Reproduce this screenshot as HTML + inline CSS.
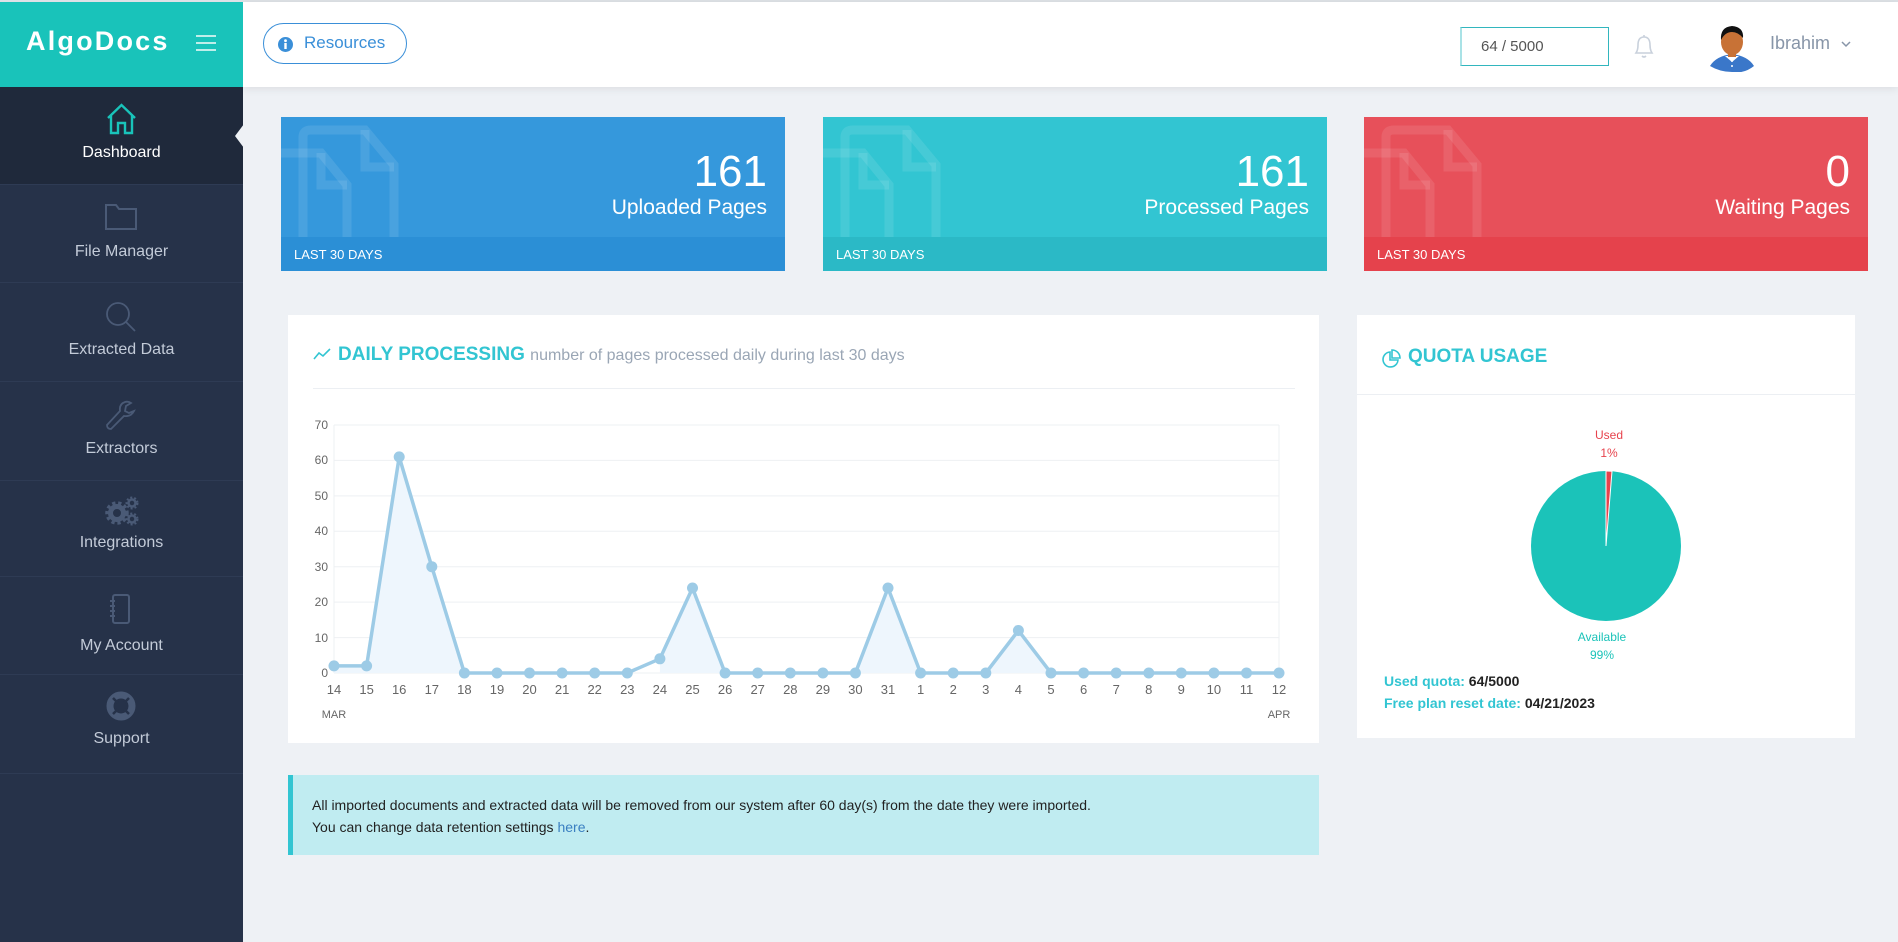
<!DOCTYPE html>
<html><head><meta charset="utf-8"><style>
*{margin:0;padding:0;box-sizing:border-box}
body{width:1898px;height:942px;background:#eef1f5;font-family:"Liberation Sans",sans-serif;position:relative;overflow:hidden}
.a{position:absolute}
.side{left:0;top:87px;width:243px;height:855px;background:#263249}
.item{position:absolute;left:0;width:243px;border-bottom:1px solid #2e3b54;text-align:center;color:#c3cbd8;font-size:16px}
.item svg{position:absolute;left:105px}
.item span{position:absolute;left:0;width:243px}
.card{position:absolute;top:117px;width:504px;height:154px;color:#fff;overflow:hidden}
.card .f{position:absolute;left:0;bottom:0;width:100%;height:34px;font-size:13px;padding:10px 0 0 13px}
.card .n{position:absolute;right:18px;top:30px;font-size:44px;font-weight:300}
.card .l{position:absolute;right:18px;top:79px;font-size:21px}
.panel{position:absolute;background:#fff}
</style></head><body>
<div class="a" style="left:0;top:0;width:1898px;height:2px;background:#dde1e6"></div>
<div class="a" style="left:243px;top:2px;width:1655px;height:85px;background:#fff;box-shadow:0 2px 8px rgba(0,0,0,.08)"></div>
<div class="a" style="left:0;top:2px;width:243px;height:85px;background:#19c3ba"></div>
<div class="a" style="left:26px;top:26px;color:#fff;font-size:27px;font-weight:bold;letter-spacing:2.2px">AlgoDocs</div>
<div class="a" style="left:196px;top:35px;width:20px;height:2px;background:#bfeeea;box-shadow:0 7px 0 #bfeeea,0 14px 0 #bfeeea"></div>
<div class="a" style="left:263px;top:23px;width:144px;height:41px;border:1px solid #3a8fd8;border-radius:21px;color:#3a8fd8;font-size:17px;padding:9px 0 0 40px">Resources</div>
<svg class="a" style="left:278px;top:37px" width="15" height="15"><circle cx="7.5" cy="7.5" r="7.5" fill="#3a8fd8"/><rect x="6.3" y="6" width="2.4" height="6" fill="#fff"/><circle cx="7.5" cy="3.7" r="1.4" fill="#fff"/></svg>
<div class="a" style="left:1460px;top:27px;width:149px;height:39px;border:1px solid #32b6be;border-left:2px solid #a9e2e6;font-size:15px;color:#555;padding:10px 0 0 19px">64 / 5000</div>
<svg class="a" style="left:1633px;top:33px" width="22" height="27" fill="none" stroke="#c9d1dc" stroke-width="1.6"><path d="M3 20 Q5 17 5 12 Q5 4 11 4 Q17 4 17 12 Q17 17 19 20 Z"/><path d="M9 23 Q11 25 13 23"/><path d="M11 2v2"/></svg>
<svg class="a" style="left:1708px;top:22px" width="48" height="50"><path d="M2 44 Q8 34 24 32 Q40 34 46 44 Q36 52 24 50 Q12 50 2 44Z" fill="#3a77c9"/><path d="M17 34 L24 40 L31 34 Z" fill="#fff"/><circle cx="24" cy="39" r="1" fill="#fff"/><circle cx="24" cy="44" r="1" fill="#fff"/><ellipse cx="24" cy="20" rx="11" ry="13" fill="#c87236"/><path d="M13 18 Q12 5 24 4 Q36 5 35 16 Q30 10 24 10 Q17 10 13 18Z" fill="#111"/><rect x="20" y="30" width="8" height="5" fill="#c87236"/></svg>
<div class="a" style="left:1770px;top:33px;font-size:18px;color:#8795a8">Ibrahim</div>
<svg class="a" style="left:1841px;top:41px" width="10" height="7" fill="none" stroke="#8795a8" stroke-width="1.5"><path d="M1 1l4 4 4-4"/></svg>

<div class="a side"></div>
<div class="item" style="top:87px;height:98px;background:#1f293b;color:#fff">
<svg style="top:16px" width="33" height="32" fill="none" stroke="#19c3ba" stroke-width="2.4"><path d="M3 15 L16.5 2 L30 15 M6 12 V30 H13 V20 H20 V30 H27 V12"/></svg><span style="top:57px">Dashboard</span></div>
<div class="a" style="left:235px;top:124px;width:0;height:0;border-top:12px solid transparent;border-bottom:12px solid transparent;border-right:9px solid #eef1f5"></div>
<div class="item" style="top:185px;height:98px"><svg style="top:19px" width="32" height="26" fill="none" stroke="#4a5a76" stroke-width="2"><path d="M1 1 H11 L14 5 H31 V25 H1 Z"/></svg><span style="top:58px">File Manager</span></div>
<div class="item" style="top:283px;height:99px"><svg style="top:18px" width="32" height="32" fill="none" stroke="#4a5a76" stroke-width="1.8"><circle cx="13" cy="13" r="11"/><path d="M21 21 L30 30"/></svg><span style="top:58px">Extracted Data</span></div>
<div class="item" style="top:382px;height:99px"><svg style="top:18px" width="32" height="32" fill="none" stroke="#4a5a76" stroke-width="1.8"><path d="M20 2 Q14 4 15 11 L2 25 Q2 29 6 29 L19 16 Q26 17 29 11 L24 13 L20 11 L21 6 L26 3 Q23 1 20 2Z"/></svg><span style="top:58px">Extractors</span></div>
<div class="item" style="top:481px;height:96px"><svg style="top:15px" width="34" height="30"><g fill="none" stroke="#4a5a76"><circle cx="12" cy="17" r="6.5" stroke-width="5"/><circle cx="12" cy="17" r="10" stroke-width="3.5" stroke-dasharray="3.2 2.8"/><circle cx="27" cy="7" r="3.5" stroke-width="2.5"/><circle cx="27" cy="7" r="5.5" stroke-width="2" stroke-dasharray="2 2"/><circle cx="27" cy="23" r="3.5" stroke-width="2.5"/><circle cx="27" cy="23" r="5.5" stroke-width="2" stroke-dasharray="2 2"/></g></svg><span style="top:53px">Integrations</span></div>
<div class="item" style="top:577px;height:98px"><svg style="top:16px" width="32" height="32" fill="none" stroke="#4a5a76" stroke-width="2"><rect x="8" y="2" width="16" height="28" rx="2"/><path d="M5 8h5M5 13h5M5 18h5M5 23h5"/></svg><span style="top:60px">My Account</span></div>
<div class="item" style="top:675px;height:99px"><svg style="top:15px" width="32" height="32" fill="none" stroke="#4a5a76"><circle cx="16" cy="16" r="11" stroke-width="7"/><path d="M8 8l5 5M24 8l-5 5M8 24l5-5M24 24l-5-5" stroke="#263249" stroke-width="2.5"/></svg><span style="top:55px">Support</span></div>

<div class="card" style="left:281px;background:#3598dc"><svg class="a" style="left:0;top:0" width="130" height="154" fill="none" stroke="rgba(255,255,255,.1)" stroke-width="9"><path d="M22 130 V20 Q22 13 30 13 H84 L113 48 V125 Q113 133 105 133 H70"/><path d="M84 13 V50 H113"/><path d="M-10 36 H40 L66 68 V160"/><path d="M40 36 V68 H66"/></svg><div class="n">161</div><div class="l">Uploaded Pages</div><div class="f" style="background:#2b8fd6">LAST 30 DAYS</div></div>
<div class="card" style="left:823px;background:#32c5d2"><svg class="a" style="left:0;top:0" width="130" height="154" fill="none" stroke="rgba(255,255,255,.1)" stroke-width="9"><path d="M22 130 V20 Q22 13 30 13 H84 L113 48 V125 Q113 133 105 133 H70"/><path d="M84 13 V50 H113"/><path d="M-10 36 H40 L66 68 V160"/><path d="M40 36 V68 H66"/></svg><div class="n">161</div><div class="l">Processed Pages</div><div class="f" style="background:#2bb9c6">LAST 30 DAYS</div></div>
<div class="card" style="left:1364px;background:#e7505a"><svg class="a" style="left:0;top:0" width="130" height="154" fill="none" stroke="rgba(255,255,255,.1)" stroke-width="9"><path d="M22 130 V20 Q22 13 30 13 H84 L113 48 V125 Q113 133 105 133 H70"/><path d="M84 13 V50 H113"/><path d="M-10 36 H40 L66 68 V160"/><path d="M40 36 V68 H66"/></svg><div class="n">0</div><div class="l">Waiting Pages</div><div class="f" style="background:#e5424c">LAST 30 DAYS</div></div>

<div class="panel" style="left:288px;top:315px;width:1031px;height:428px"></div>
<svg class="a" style="left:313px;top:347px" width="18" height="14" fill="none" stroke="#32c5d2" stroke-width="1.6"><path d="M1 12 L6 6 L10 9 L17 2"/></svg>
<div class="a" style="left:338px;top:344px;font-size:19px;font-weight:bold;color:#32c5d2">DAILY PROCESSING <span style="font-weight:normal;font-size:16px;color:#9aa6b5">number of pages processed daily during last 30 days</span></div>
<div class="a" style="left:313px;top:388px;width:982px;height:1px;background:#eceff3"></div>

<svg class="a" style="left:0;top:0" width="1898" height="942">
<g stroke="#eef0f3" stroke-width="1">
<path d="M334 425H1279M334 460.4H1279M334 495.9H1279M334 531.3H1279M334 566.7H1279M334 602.1H1279M334 637.6H1279M334 673H1279M334 425V673M1279 425V673"/>
</g>
<g font-size="12" fill="#666" text-anchor="end" font-family="Liberation Sans">
<text x="328" y="429">70</text><text x="328" y="464">60</text><text x="328" y="500">50</text><text x="328" y="535">40</text><text x="328" y="571">30</text><text x="328" y="606">20</text><text x="328" y="642">10</text><text x="328" y="677">0</text>
</g>
<path d="M334 665.9 L366.6 665.9 L399.2 456.9 L431.8 566.7 L464.4 673 L659.9 673 L659.9 658.8 L692.5 588 L725.1 673 L855.4 673 L888 588 L920.6 673 L985.8 673 L1018.4 630.5 L1051 673 L1279 673 L334 673Z" fill="#eef6fd"/>
<path d="M334 665.9 L366.6 665.9 L399.2 456.9 L431.8 566.7 L464.4 673 L627.3 673 L659.9 658.8 L692.5 588 L725.1 673 L855.4 673 L888 588 L920.6 673 L985.8 673 L1018.4 630.5 L1051 673 L1279 673" fill="none" stroke="#9dcbe6" stroke-width="3.5"/>
<g fill="#9dcbe6">
<circle cx="334" cy="665.9" r="5.5"/><circle cx="366.6" cy="665.9" r="5.5"/><circle cx="399.2" cy="456.9" r="5.5"/><circle cx="431.8" cy="566.7" r="5.5"/><circle cx="464.4" cy="673" r="5.5"/><circle cx="497" cy="673" r="5.5"/><circle cx="529.5" cy="673" r="5.5"/><circle cx="562.1" cy="673" r="5.5"/><circle cx="594.7" cy="673" r="5.5"/><circle cx="627.3" cy="673" r="5.5"/><circle cx="659.9" cy="658.8" r="5.5"/><circle cx="692.5" cy="588" r="5.5"/><circle cx="725.1" cy="673" r="5.5"/><circle cx="757.7" cy="673" r="5.5"/><circle cx="790.3" cy="673" r="5.5"/><circle cx="822.9" cy="673" r="5.5"/><circle cx="855.4" cy="673" r="5.5"/><circle cx="888" cy="588" r="5.5"/><circle cx="920.6" cy="673" r="5.5"/><circle cx="953.2" cy="673" r="5.5"/><circle cx="985.8" cy="673" r="5.5"/><circle cx="1018.4" cy="630.5" r="5.5"/><circle cx="1051" cy="673" r="5.5"/><circle cx="1083.6" cy="673" r="5.5"/><circle cx="1116.2" cy="673" r="5.5"/><circle cx="1148.8" cy="673" r="5.5"/><circle cx="1181.3" cy="673" r="5.5"/><circle cx="1213.9" cy="673" r="5.5"/><circle cx="1246.5" cy="673" r="5.5"/><circle cx="1279" cy="673" r="5.5"/>
</g>
<g font-size="13" fill="#666" text-anchor="middle" font-family="Liberation Sans">
<text x="334" y="694">14</text><text x="366.6" y="694">15</text><text x="399.2" y="694">16</text><text x="431.8" y="694">17</text><text x="464.4" y="694">18</text><text x="497" y="694">19</text><text x="529.5" y="694">20</text><text x="562.1" y="694">21</text><text x="594.7" y="694">22</text><text x="627.3" y="694">23</text><text x="659.9" y="694">24</text><text x="692.5" y="694">25</text><text x="725.1" y="694">26</text><text x="757.7" y="694">27</text><text x="790.3" y="694">28</text><text x="822.9" y="694">29</text><text x="855.4" y="694">30</text><text x="888" y="694">31</text><text x="920.6" y="694">1</text><text x="953.2" y="694">2</text><text x="985.8" y="694">3</text><text x="1018.4" y="694">4</text><text x="1051" y="694">5</text><text x="1083.6" y="694">6</text><text x="1116.2" y="694">7</text><text x="1148.8" y="694">8</text><text x="1181.3" y="694">9</text><text x="1213.9" y="694">10</text><text x="1246.5" y="694">11</text><text x="1279" y="694">12</text>
<text x="334" y="718" font-size="11">MAR</text><text x="1279" y="718" font-size="11">APR</text>
</g>
</svg>

<div class="panel" style="left:1357px;top:315px;width:498px;height:423px"></div>
<div class="a" style="left:1357px;top:394px;width:498px;height:1px;background:#eceff3"></div>
<svg class="a" style="left:1382px;top:349px" width="19" height="19" fill="none" stroke="#32c5d2" stroke-width="1.6"><path d="M8 3 A7.5 7.5 0 1 0 16 11 H8 Z"/><path d="M10 1 V9 H18 A8 8 0 0 0 10 1Z"/></svg>
<div class="a" style="left:1408px;top:346px;font-size:19px;font-weight:bold;color:#32c5d2">QUOTA USAGE</div>
<svg class="a" style="left:0;top:0" width="1898" height="942">
<circle cx="1606" cy="546" r="75" fill="#1bc3b9"/>
<path d="M1606 546 L1606 471 A75 75 0 0 1 1612 471.2 Z" fill="#e7434d" stroke="#fff" stroke-width="1"/>
<g font-size="12" text-anchor="middle" font-family="Liberation Sans">
<text x="1609" y="439" fill="#e7434d">Used</text><text x="1609" y="457" fill="#e7434d">1%</text>
<text x="1602" y="641" fill="#1bc3b9">Available</text><text x="1602" y="659" fill="#1bc3b9">99%</text>
</g></svg>
<div class="a" style="left:1384px;top:670px;font-size:14px;font-weight:bold;color:#32c5d2;line-height:22px">Used quota: <span style="color:#222">64/5000</span><br>Free plan reset date: <span style="color:#222">04/21/2023</span></div>

<div class="a" style="left:288px;top:775px;width:1031px;height:80px;background:#c0ecf1;border-left:5px solid #32c5d2;font-size:14px;color:#222;padding:19px 0 0 19px;line-height:22px">All imported documents and extracted data will be removed from our system after 60 day(s) from the date they were imported.<br>You can change data retention settings <span style="color:#3a7fc1">here</span>.</div>
</body></html>
